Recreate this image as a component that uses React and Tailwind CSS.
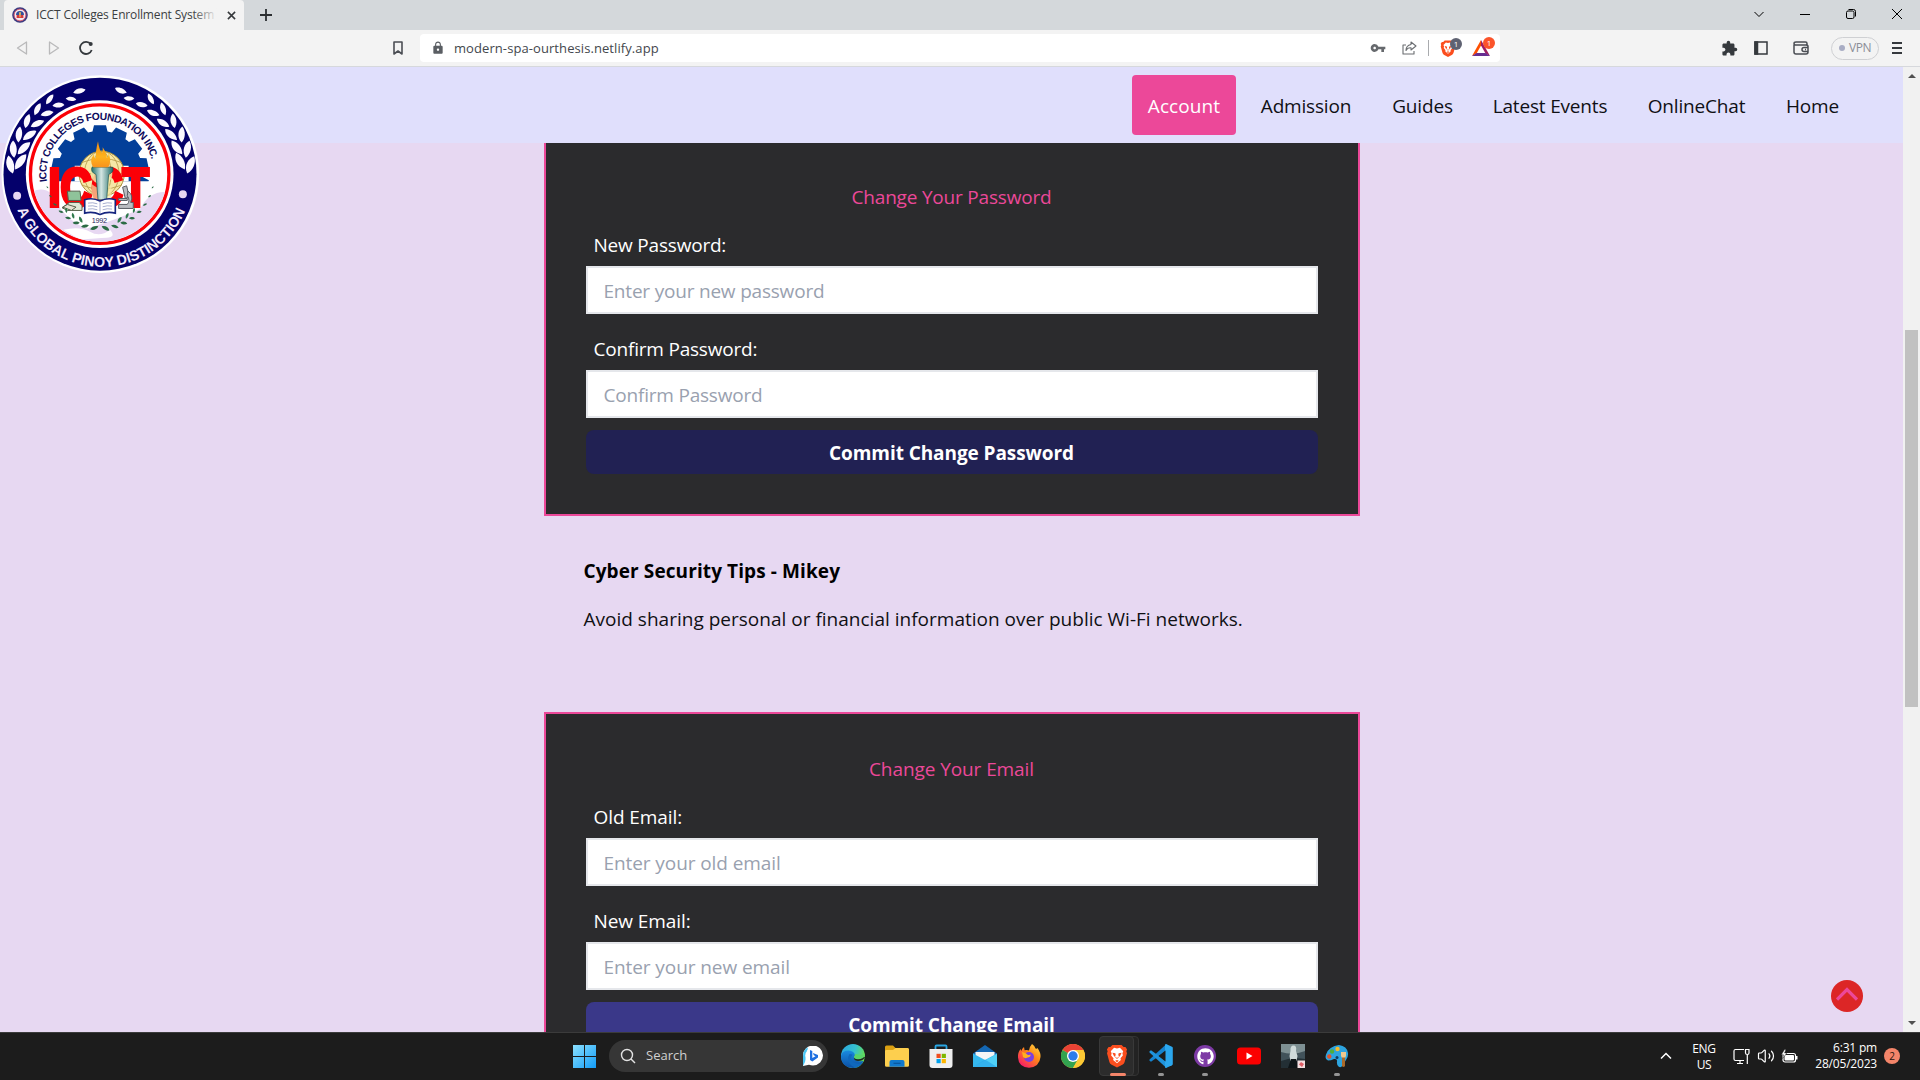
import React from "react";
import { MdVpnKey, MdExtension, MdLock } from "react-icons/md";
import { FaGithub } from "react-icons/fa";
import { Volume2 } from "lucide-react";

const polar = (r, deg) => {
  const a = (deg * Math.PI) / 180;
  return [300 + r * Math.sin(a), 325 - r * Math.cos(a)];
};

const LAUREL = [20, 30, 40, 50, 60, 70, 80];

const gearPath = (() => {
  const pts = [];
  for (let i = -5; i <= 5; i++) {
    const c = i * 26;
    [[130, -13], [130, -10], [148, -7], [148, 7], [130, 10], [130, 13]].forEach(([r, d]) => pts.push(polar(r, c + d).map((n) => n.toFixed(1)).join(" ")));
  }
  return "M" + pts.join("L") + "Z";
})();

function Leaf({ x, y, rot, len, fill }) {
  return (
    <path
      d={`M0 ${len} C${-len * 0.62} ${len * 0.3} ${-len * 0.4} ${-len * 0.6} ${len * 0.15} ${-len} C${len * 0.6} ${-len * 0.4} ${len * 0.5} ${len * 0.5} 0 ${len}Z`}
      transform={`translate(${x} ${y}) rotate(${rot})`}
      fill={fill}
    />
  );
}

function CollegeSeal({ className }) {
  return (
    <svg viewBox="0 24 600 604" className={className}>
      <defs>
        <path id="sealTop" d="M141 349 A161 161 0 1 1 448 386" />
        <path id="sealBottom" d="M50 428 A272 272 0 0 0 572 380" />
        <clipPath id="sealInner"><circle cx="299" cy="325" r="203" /></clipPath>
        <clipPath id="gearClip"><rect x="120" y="160" width="360" height="186" /></clipPath>
        <linearGradient id="torch" x1="0" x2="1"><stop offset="0" stopColor="#1f6f6b" /><stop offset=".45" stopColor="#d5e6e3" /><stop offset="1" stopColor="#1b6965" /></linearGradient>
        <linearGradient id="flame" x1="0" x2="0" y1="0" y2="1"><stop offset="0" stopColor="#f08a12" /><stop offset=".6" stopColor="#ffb31c" /><stop offset="1" stopColor="#f7921e" /></linearGradient>
      </defs>
      <circle cx="301" cy="325" r="297" fill="#fff" />
      <circle cx="300" cy="325" r="290" fill="#04006b" />
      {LAUREL.map((a, i) => {
        const s = 16 + i * 2;
        return [1, -1].map((k) => {
          const [ox, oy] = polar(272, k * (a + 4));
          const [ix, iy] = polar(243, k * (a + 1));
          return (
            <g key={`${a}${k}`}>
              {i > 0 && <Leaf x={ox} y={oy} rot={k * (a - 62)} len={s} fill="#fbf8ff" />}
              <Leaf x={ix} y={iy} rot={k * (a - 112)} len={s} fill="#fbf8ff" />
            </g>
          );
        });
      })}
      {[1, -1].map((k) => {
        const [x, y] = polar(258, k * 14);
        return <Leaf key={k} x={x} y={y} rot={k * -72} len={19} fill="#fbf8ff" />;
      })}
      <circle cx="51" cy="390" r="12" fill="#e7d7f2" />
      <circle cx="549" cy="385" r="12" fill="#e7d7f2" />
      <circle cx="299" cy="325" r="222" fill="#fff" />
      <circle cx="299" cy="325" r="208" fill="#fff" stroke="#fb0007" strokeWidth="10" />
      <g clipPath="url(#sealInner)">
        <path d="M90 380Q150 350 175 420Q210 470 260 488Q330 470 420 430Q450 370 510 380V540H90Z" fill="#e7d8f2" />
        <path d="M190 492q50-12 80 6t60-6q20 22 -10 24t-80 6z" fill="#fff" />
      </g>
      <g clipPath="url(#gearClip)"><path d={gearPath} fill="#033f99" /></g>
      <path d="M224 300V346H386V300Z" fill="#fff" />
      <circle cx="305" cy="324" r="68" fill="#f6e8a6" stroke="#a98d37" strokeWidth="3" />
      <g fill="none" stroke="#b49a48" strokeWidth="2.5">
        <ellipse cx="305" cy="324" rx="28" ry="68" />
        <ellipse cx="305" cy="324" rx="52" ry="68" />
        <path d="M238 324h134M245 290q60-24 120 0M245 358q60 24 120 0M305 256v136" />
      </g>
      <text x="145" y="420" textLength="302" lengthAdjust="spacingAndGlyphs" className="fill-[#fb0007] stroke-[#fb0007] [stroke-width:12px] text-[162px] font-bold [font-family:'Liberation_Sans']">ICCT</text>
      <circle cx="305" cy="324" r="32" fill="#f6e8a6" opacity=".85" />
      <path d="M276 355q28 24 58 0v45h-58z" fill="#f6e8a6" opacity=".7" />
      <path d="M276 304h62q6 14-12 22l-6 76h-26l-6-76q-18-8-12-22z" fill="url(#torch)" stroke="#15524e" strokeWidth="2" />
      <path d="M280 304Q266 284 282 266Q282 278 288 278Q286 256 294 226Q298 254 306 262Q310 254 308 244Q324 268 320 276Q326 274 326 262Q336 290 324 304Z" fill="url(#flame)" />
      <g fill="#dfe9d5" stroke="#55604b" strokeWidth="3">
        <path d="M202 376h38l3 28h-38z" fill="#8fc39a" />
        <path d="M208 410h30l8 10v14h-44l-16-8z" />
        <path d="M188 424l14-8 26 8-14 10z" fill="#e8e2d2" />
      </g>
      <g fill="#b9bcc0" stroke="#585c62" strokeWidth="3">
        <path d="M368 364l12-4 8 34-12 4z" />
        <path d="M384 376q18 12 8 34h8v18h-44v-12h26q10-12 0-26z" />
        <path d="M356 398h26v6h-26z" />
      </g>
      <path d="M254 402q24-8 46 4q22-12 46-4v40q-24-6-46 4q-22-10-46-4z" fill="#fff" stroke="#16257f" strokeWidth="5" />
      <path d="M300 406v38M264 412q14-3 28 2M264 421q14-3 28 2M264 430q14-3 28 2M308 414q14-5 28-2M308 423q14-5 28-2M308 432q14-5 28-2" stroke="#7a86b8" strokeWidth="2" fill="none" />
      {[104, 114, 124, 134, 144, 154, 164, 174].map((a, i) =>
        [1, -1].map((k) => {
          const [x, y] = polar(163, k * a);
          const [x2, y2] = polar(149, k * (a + 3));
          const s = 4 + i * 1.3;
          return (
            <g key={`${a}${k}`}>
              <Leaf x={x} y={y} rot={k * (a - 60)} len={s} fill="#2b6b45" />
              {i > 2 && i < 6 && <Leaf x={x2} y={y2} rot={k * (a - 125)} len={s} fill="#2f7a4d" />}
            </g>
          );
        })
      )}
      <text x="275" y="471" textLength="46" className="fill-[#1c1c5c] text-[22px] [font-family:'Liberation_Sans']">1992</text>
      <text className="fill-[#0d0a5c] text-[31px] font-bold tracking-[-1.700px] [font-family:'Liberation_Sans']">
        <textPath href="#sealTop" startOffset="2">ICCT COLLEGES FOUNDATION INC.</textPath>
      </text>
      <text className="fill-[#f3eafa] text-[43px] font-bold [font-family:'Liberation_Sans']">
        <textPath href="#sealBottom" startOffset="4" textLength="646" lengthAdjust="spacingAndGlyphs">A GLOBAL PINOY DISTINCTION</textPath>
      </text>
    </svg>
  );
}

function FavIcon() {
  return (
    <svg viewBox="0 0 16 16" className="size-4">
      <circle cx="8" cy="8" r="7.8" fill="#3a3a80" />
      <circle cx="8" cy="8" r="5.9" fill="#f3e8f2" stroke="#d4566a" strokeWidth=".9" />
      <path d="M4 8a4 4 0 0 1 8 0z" fill="#33509c" />
      <path d="M4.6 8h6.8v3H4.6z" fill="#d53a3c" />
      <path d="M7 5.2h2l-.4 5H7.4z" fill="#e9b25c" />
    </svg>
  );
}

function BraveLogo({ className }) {
  return (
    <svg viewBox="0 0 24 26" className={className}>
      <path d="M7 1h10l2.2 2.3 2-.2 1.8 2.7-.8 2.1.7 2.2-2.6 9.4q-.5 1.7-2 2.7L12 25.6l-6.3-3.4q-1.5-1-2-2.7L1.100 10.100l.7-2.200L1 5.800l1.800-2.700 2 .2z" fill="#fb4e1e" />
      <path d="M12 4.800l3.200-.7 3.600 3.700-.9 2.300.5 2.300-2.600 3.100.4 1.800-1.600 1.400-2.600 2.200-2.600-2.200-1.600-1.400.4-1.800-2.600-3.100.5-2.300-.9-2.300 3.600-3.700z" fill="#fff" />
      <path d="M7 9.400l3.200.6.4 2-.8 1.600 2.200 1.600 2.200-1.600-.8-1.600.4-2 3.200-.6-1.500 3.200-1.300 1.600-2.200 2-2.200-2-1.300-1.600zM10 18.200l2-.9 2 .9-2 1.500z" fill="#fb4e1e" />
    </svg>
  );
}

function TabStrip() {
  return (
    <div className="flex h-[30px] items-center bg-[#d4d8db] pl-1">
      <div className="flex h-full w-60 items-center rounded-t bg-[#f3f3f3] pl-2">
        <FavIcon />
        <div className="relative ml-2 w-[181px] overflow-hidden whitespace-nowrap text-[12px] tracking-[-0.16px] text-[#3b3e42]">
          ICCT Colleges Enrollment System
          <div className="absolute inset-y-0 right-0 w-6 bg-linear-to-r from-transparent to-[#f3f3f3]" />
        </div>
        <svg viewBox="0 0 10 10" className="ml-[10px] size-[9px]" fill="none" stroke="#35383b" strokeWidth="1.700"><path d="M1 1l8 8M9 1l-8 8" /></svg>
      </div>
      <svg viewBox="0 0 12 12" className="ml-4 size-3" fill="none" stroke="#2b2e31" strokeWidth="1.800"><path d="M6 0v12M0 6h12" /></svg>
      <div className="ml-auto flex pb-0.5 text-black">
        {["M.5 3l4.500 4.500L9.500 3", "M0 5.500h10", "", "M0 0l10 10M10 0L0 10"].map((d, i) => (
          <div key={i} className="flex w-[46px] items-center justify-center">
            <svg viewBox="0 0 10 10" className="size-[10px] overflow-visible" fill="none" stroke="currentColor" strokeWidth="1">
              {d ? <path d={d} /> : <><rect x=".5" y="2" width="7.500" height="7.500" rx="1.500" /><path d="M2.500 .5h5q2 0 2 2v5" /></>}
            </svg>
          </div>
        ))}
      </div>
    </div>
  );
}

function Toolbar() {
  return (
    <div className="flex h-[37px] items-center border-b border-[#d6d8dc] bg-[#f3f3f3] text-[#35393d]">
      <svg viewBox="0 0 12 14" className="ml-4 h-[14px] w-3" fill="none" stroke="#b9b9ba" strokeWidth="1.300" strokeLinejoin="round"><path d="M10.500 1v12L1.500 7z" /></svg>
      <svg viewBox="0 0 12 14" className="ml-5 h-[14px] w-3" fill="none" stroke="#b9b9ba" strokeWidth="1.300" strokeLinejoin="round"><path d="M1.500 1v12l9-6z" /></svg>
      <svg viewBox="0 0 14 14" className="ml-[19px] size-[14px]" fill="none" stroke="currentColor" strokeWidth="1.800"><path d="M11.800 3.300A6 6 0 1 0 12.700 9" /><circle cx="11.700" cy="3" r="2" fill="currentColor" stroke="none" /></svg>
      <svg viewBox="0 0 10 14" className="ml-[300px] h-[14px] w-[10px]" fill="none" stroke="#4b4e54" strokeWidth="1.600" strokeLinejoin="round"><path d="M1 1h8v12L5 10 1 13z" /></svg>
      <div className="ml-[17px] flex h-7 w-[1080px] items-center rounded bg-white pl-[11px]">
        <MdLock className="size-[14px] text-[#5a5e63]" />
        <span className="ml-[9px] pt-px text-[13px] tracking-[0.08px] text-[#43474d]">modern-spa-ourthesis.netlify.app</span>
        <MdVpnKey className="ml-auto size-[16px] text-[#66696d]" />
        <svg viewBox="0 0 15 14" className="ml-[16px] h-[14px] w-[15px]" fill="none" stroke="#6a6d71" strokeWidth="1.100" strokeLinejoin="round"><path d="M4 4H1v9h11v-3M9 1l5 4-5 4V6.800Q5.500 6.500 4 9.500 4 4.500 9 3.500z" /></svg>
        <span className="ml-[11px] h-4 w-px bg-[#a9abae]" />
        <span className="relative ml-[11px]">
          <BraveLogo className="h-[19px] w-[16px]" />
          <span className="absolute -right-[6px] -top-px flex size-[12px] items-center justify-center rounded-full bg-[#5f6272] text-[8px] leading-none text-white">1</span>
        </span>
        <span className="relative ml-[16px] mr-[10px]">
          <svg viewBox="0 0 18 16" className="h-[16px] w-[18px]">
            <path d="M9 0L0 16l4.500-2.500L9 5.500z" fill="#ff5000" />
            <path d="M9 0l9 16-4.500-2.500L9 5.500z" fill="#9e1f63" />
            <path d="M0 16h18l-4.500-3h-9z" fill="#662d91" />
          </svg>
          <span className="absolute -right-[5px] -top-[3px] flex size-[12px] items-center justify-center rounded-full bg-[#fb542b] text-[8px] leading-none text-white">1</span>
        </span>
      </div>
      <MdExtension className="ml-[221px] size-[17px]" />
      <svg viewBox="0 0 14 14" className="ml-[16px] size-[14px]" fill="none" stroke="currentColor" strokeWidth="1.500"><path d="M1 1h12v12H1z" /><path d="M1 1h2.500v12H1z" fill="currentColor" /></svg>
      <svg viewBox="0 0 16 14" className="ml-[25px] h-[14px] w-4" fill="none" stroke="#4b4e54" strokeWidth="1.500" strokeLinejoin="round"><path d="M1 3.500V11q0 2 2 2h10q2 0 2-2V5.500q0-1.500-2-1.500H2.500Q1 4 1 2.500 1 1 3 1h9.500q1.500 0 1.500 1.500V4M15 6.500h-4q-2 0-2 2t2 2h4M12 8.500h1" /></svg>
      <div className="ml-[22px] flex h-[23px] w-12 items-center justify-center gap-1 rounded-full border border-[#cfd0d3] text-[12px] tracking-[-0.4px] text-[#8b8d97]">
        <span className="size-1.5 rounded-full bg-[#a9adc4]" />VPN
      </div>
      <div className="ml-[13px] flex w-[10px] flex-col gap-[3.500px]">
        <span className="h-[1.500px] bg-[#35393d]" /><span className="h-[1.500px] bg-[#35393d]" /><span className="h-[1.500px] bg-[#35393d]" />
      </div>
    </div>
  );
}

function SiteHeader() {
  const link = "flex h-[60px] items-center justify-center whitespace-nowrap pt-0.5 tracking-[-0.18px] text-[#101014]";
  return (
    <header className="relative z-10 flex h-[76px] shrink-0 items-center justify-end gap-2 bg-[#e0dffc] pr-12 text-[19px]">
      <a className="flex h-[60px] w-[104px] items-center justify-center rounded bg-[#ec4899] pt-0.5 tracking-[0.1px] text-white">Account</a>
      <a className={`${link} w-[124px]`}>Admission</a>
      <a className={`${link} w-[93px]`}>Guides</a>
      <a className={`${link} w-[146px]`}>Latest Events</a>
      <a className={`${link} w-[131px]`}>OnlineChat</a>
      <a className={`${link} w-[85px]`}>Home</a>
      <CollegeSeal className="absolute left-0 top-[7px] h-[201px] w-[200px]" />
    </header>
  );
}

function FormCard({ title, fields, action, tone, tracking }) {
  return (
    <section className={`h-[376px] shrink-0 border-2 border-[#ec4899] bg-[#2b2b2d] p-10 text-[19px] ${tracking}`}>
      <h2 className="h-7 pt-px text-center leading-7 text-[#ec4899]">{title}</h2>
      {fields.map(([label, hint]) => (
        <label key={label} className="mt-5 block">
          <span className="mb-2 block h-7 pl-2 pt-px leading-7 text-white">{label}</span>
          <input placeholder={hint} className="block h-12 w-full border-2 border-gray-200 bg-white pl-4 pt-0.5 outline-none placeholder:text-gray-400" />
        </label>
      ))}
      <button className={`mt-3 block h-11 w-full rounded-lg pt-0.5 font-bold tracking-[-0.08px] text-white ${tone}`}>{action}</button>
    </section>
  );
}

function Page() {
  return (
    <div className="flex h-[965px] shrink-0 overflow-hidden">
      <div className="relative flex w-[1903px] flex-col overflow-hidden bg-[#e7d8f2]">
        <SiteHeader />
        <main className="mx-auto -mt-[3px] flex w-[816px] flex-col">
          <FormCard title="Change Your Password" fields={[["New Password:", "Enter your new password"], ["Confirm Password:", "Confirm Password"]]} action="Commit Change Password" tone="bg-[#212153]" tracking="tracking-[-0.2px]" />
          <section className="h-[196px] shrink-0 px-10 pt-[41px] text-[19px] leading-7 text-black">
            <h3 className="font-bold tracking-[0.1px]">Cyber Security Tips - Mikey</h3>
            <p className="mt-5 whitespace-nowrap tracking-[0.01px] text-[#101014]">Avoid sharing personal or financial information over public Wi-Fi networks.</p>
          </section>
          <FormCard title="Change Your Email" fields={[["Old Email:", "Enter your old email"], ["New Email:", "Enter your new email"]]} action="Commit Change Email" tone="bg-[#3a3889]" tracking="tracking-[-0.08px]" />
        </main>
        <button className="absolute bottom-[20px] right-10 flex size-8 items-center justify-center rounded-full bg-[#dc2626]">
          <svg viewBox="0 0 22 14" className="-mt-1 h-[14px] w-[22px]" fill="none" stroke="#ec4899" strokeWidth="3.200"><path d="M1 12.500L11 2.500l10 10" /></svg>
        </button>
      </div>
      <div className="flex w-[17px] flex-col items-center bg-[#f1f1f1]">
        <svg viewBox="0 0 8 4" className="mt-[7px] h-1 w-2"><path d="M0 4l4-4 4 4z" fill="#505050" /></svg>
        <div className="mt-[252px] h-[377px] w-[13px] bg-[#c1c1c1]" />
        <svg viewBox="0 0 8 4" className="mb-[7px] mt-auto h-1 w-2"><path d="M0 0l4 4 4-4z" fill="#505050" /></svg>
      </div>
    </div>
  );
}

const apps = [
  {
    name: "edge",
    art: (
      <>
        <defs>
          <linearGradient id="e1" x1="0" x2="1" y1="0" y2=".3"><stop offset="0" stopColor="#2aa5e0" /><stop offset=".6" stopColor="#35c1d0" /><stop offset="1" stopColor="#63dc5a" /></linearGradient>
          <linearGradient id="e2" x1="0" x2="0" y1="0" y2="1"><stop offset="0" stopColor="#1a8be0" /><stop offset="1" stopColor="#0b4fa5" /></linearGradient>
        </defs>
        <circle cx="12" cy="12" r="12" fill="url(#e1)" />
        <path d="M0 12Q1 6.500 7.500 6.500q6 .5 6.500 5-1.500 1-1 3 1.500 3.500 9 2.500l.3.600Q18.500 24 12 24 0 23 0 12z" fill="url(#e2)" />
        <path d="M8.500 10Q5.500 15 9 20q2 2.800 5 3.600 5-.6 8.300-5.600-5 3-9.300.5-5-3-1.500-8z" fill="#0f68bd" />
        <path d="M13.800 11.500q.6 2-.9 3 .6 2.300 4.100 2.500 5 0 6.700-3.500Q24 18 20 21l3.500 1 .8-6-.5-3z" fill="#1c1c1c" opacity=".95" />
        <path d="M14 10q0 1.500-1 2.500-.4 2.500 4 2.800 5.500 0 6.700-3.800z" fill="#58d568" />
      </>
    ),
  },
  {
    name: "files",
    art: (
      <>
        <path d="M0 3q0-1.500 1.500-1.500h6.500l2.500 2.500H22q2 0 2 2v4H0z" fill="#dba012" />
        <path d="M0 7q0-1 1.500-1H8l2.500-2H22.500Q24 4 24 5.500v16q0 1.200-1.500 1.200h-21Q0 22.700 0 21.500z" fill="#fdcf4e" />
        <path d="M4.500 22.700V18q0-2 2-2h11q2 0 2 2v4.700z" fill="#1079cd" />
        <path d="M8.500 19.300h7" stroke="#0a559b" strokeWidth="1.200" />
      </>
    ),
  },
  {
    name: "store",
    art: (
      <>
        <path d="M6.500 6V2.500q0-1 1-1h9q1 0 1 1V6" fill="none" stroke="#29a6e2" strokeWidth="1.800" />
        <path d="M.5 5h23v16q0 3-3 3h-17q-3 0-3-3z" fill="#efefef" />
        <path d="M7.500 9.800h4.200V14H7.500z" fill="#f04e1f" /><path d="M12.700 9.800h4.200V14h-4.200z" fill="#7db700" />
        <path d="M7.500 15h4.200v4.200H7.500z" fill="#00a1ec" /><path d="M12.700 15h4.200v4.200h-4.200z" fill="#fdb500" />
      </>
    ),
  },
  {
    name: "mail",
    art: (
      <>
        <path d="M0 9.500L12 1l12 8.500v2H0z" fill="#1467b4" />
        <path d="M2.500 8h19v6l-9.500 6-9.500-6z" fill="#f3f4f6" />
        <path d="M0 9.500l12 6.500 12-6.500V23H0z" fill="#35b8ef" />
        <path d="M0 23L24 10v13z" fill="#4fd0f7" /><path d="M0 23h24L12 15.500z" fill="#28a5e8" opacity=".7" />
      </>
    ),
  },
  {
    name: "firefox",
    art: (
      <>
        <defs><linearGradient id="f1" x1="1" x2=".2" y1="0" y2="1"><stop offset="0" stopColor="#ffe14a" /><stop offset=".45" stopColor="#ff8a16" /><stop offset="1" stopColor="#f5156c" /></linearGradient></defs>
        <path d="M15 0q3 2 3.500 4.500 1.500.5 2-.5Q24 9 23.500 13 22.500 23 12 23.800 1.500 23 1 13.500.500 9 3.500 5l.8 2Q5 4.500 7 3l.6 3.200q3-.6 4.400.4Q12.500 2.500 15 0z" fill="url(#f1)" />
        <circle cx="12" cy="13" r="5" fill="#7a3fe0" />
        <path d="M5 8q4 .5 5.500 2.800 2 .5 3-.3.500 2.500-3 3-2.500 1.500-4.500-.5z" fill="#ffb01f" />
      </>
    ),
  },
  {
    name: "chrome",
    art: (
      <>
        <circle cx="12" cy="12" r="12" fill="#fcc934" />
        <path d="M12 12L1.600 6A12 12 0 0 1 22.400 6z" fill="#e94235" />
        <path d="M12 12L1.600 6A12 12 0 0 0 12 24l5-9z" fill="#32a350" />
        <path d="M12 6h10.400A12 12 0 0 1 12 24l5.500-9z" fill="#fcc934" />
        <circle cx="12" cy="12" r="6" fill="#fff" /><circle cx="12" cy="12" r="4.700" fill="#2b7de9" />
      </>
    ),
  },
  { name: "brave", active: true },
  {
    name: "code",
    open: true,
    art: (
      <>
        <path d="M17.500 6.500L2 17.700.5 16.800v-1.300L17.500 0z" fill="#1583cf" />
        <path d="M17.500 17.500L2 6.300.5 7.200v1.300L17.500 24z" fill="#1f93dc" />
        <path d="M17 0l6 2.800q.8.400.8 1.200v16q0 .8-.8 1.200L17 24q-.8 0-1-.8V.8q.2-.8 1-.8z" fill="#2ba7ee" />
        <path d="M16.500 6.500v11L9.500 12z" fill="#1c1c1c" />
      </>
    ),
  },
  { name: "github", open: true },
  { name: "youtube", art: <><rect y="3.500" width="24" height="17" rx="3.500" fill="#fb0000" /><path d="M9.500 8.500v7l6-3.500z" fill="#fff" /></> },
  {
    name: "photo",
    art: (
      <>
        <path d="M0 0h24v24H0z" fill="#41525a" /><path d="M0 0h24v7Q12 12 0 8z" fill="#7e9093" />
        <path d="M0 17q10-4 24-2v9H0z" fill="#232f35" />
        <path d="M9.500 7Q9 1.500 12.500 1.500T15 7l1.500 5-1 5-3 1.500-3-1.500-1-5z" fill="#cfdada" /><path d="M10 15h5l3 9H7z" fill="#0e1518" />
        <path d="M16.500 16.500H24V24h-7.500z" fill="#f2dfe0" /><path d="M18 20.500l2-2.500 3 2-2 3z" fill="#df5d66" />
      </>
    ),
  },
  {
    name: "paint",
    open: true,
    art: (
      <>
        <path d="M14 1q8 1 9 8 .5 4-2 7-2 3-3.500 6-2 2-4 .5-2-2-1.500-5 .5-3-3-2.500-3 1.500-6 1.500Q-.5 16 1 10.500 4 2 14 1z" fill="#2da4df" />
        <circle cx="12.500" cy="5" r="2.200" fill="#f8bb2a" /><circle cx="7" cy="7.500" r="2.200" fill="#4fae3a" /><circle cx="4.300" cy="12.500" r="2.200" fill="#e2542c" /><circle cx="12" cy="13.500" r="1.500" fill="#123a5c" />
        <path d="M16 8h5v4l-1 2h-3l-1-2z" fill="#edc88f" /><path d="M17 13.500h3V22q-1.500 2-3 0z" fill="#a9692a" />
      </>
    ),
  },
];

function AppIcon({ app }) {
  if (app.name === "brave") return <BraveLogo className="h-6 w-[22px]" />;
  if (app.name === "github") return <span className="flex size-[22px] items-center justify-center rounded-full bg-[#7d3aa5]"><FaGithub className="size-[17px] text-white" /></span>;
  return <svg viewBox="0 0 24 24" className="size-6">{app.art}</svg>;
}

function Taskbar() {
  return (
    <footer className="flex h-12 shrink-0 items-center border-t border-[#3b3b3b] bg-[#1c1c1c] pb-px text-white">
      <svg viewBox="0 0 23 23" className="ml-[573px] size-[23px]">
        <defs><linearGradient id="win" x1="0" y1="0" x2="1" y2="1"><stop offset="0" stopColor="#8be0fd" /><stop offset="1" stopColor="#129cf8" /></linearGradient></defs>
        <path d="M0 0h11v11H0zM12 0h11v11H12zM0 12h11v11H0zM12 12h11v11H12z" fill="url(#win)" />
      </svg>
      <div className="ml-[13px] flex h-8 w-[219px] items-center rounded-full bg-[#363636] pl-[11px] pr-[5px]">
        <svg viewBox="0 0 16 16" className="size-4" fill="none" stroke="#e3e3e3" strokeWidth="1.400"><circle cx="7" cy="7" r="5.500" /><path d="M11 11l4 4" /></svg>
        <span className="ml-[10px] text-[13px] text-[#d0d0d0]">Search</span>
        <svg viewBox="0 0 20 20" className="ml-auto size-5"><path d="M0 20V10a10 10 0 1 1 10 9.500q-2 0-4-.7z" fill="#fff" /><path d="M0 20V10a10 10 0 0 1 5-8.700L2 16z" fill="#49c6f5" /><circle cx="10.200" cy="9.800" r="8" fill="#fff" /><path d="M7 4l2.300.9v7l3.200-1.700-1.700-.9-.9-2.200 5.100 1.800v2.700L9.300 15.400 7 14z" fill="#1d6fe0" /></svg>
      </div>
      <div className="ml-[3px] flex">
        {apps.map((app) => (
          <div key={app.name} className="relative flex h-[46px] w-11 items-center justify-center">
            {app.active && <><span className="absolute left-[9px] top-[3px] h-10 w-[35px] rounded border border-[#333] bg-[#232323]" /><span className="absolute left-1 top-[3px] h-10 w-[35px] rounded border border-[#393939] bg-[#2c2c2c]" /></>}
            <span className="relative"><AppIcon app={app} /></span>
            {app.active && <span className="absolute bottom-[3px] left-[15px] h-[3px] w-4 rounded-full bg-[#f4856a]" />}
            {app.open && <span className="absolute bottom-[3px] left-[19px] h-[3px] w-1.5 rounded-full bg-[#949494]" />}
          </div>
        ))}
      </div>
      <svg viewBox="0 0 12 8" className="ml-auto h-2 w-3" fill="none" stroke="currentColor" strokeWidth="1.500"><path d="M1 6.500l5-5 5 5" /></svg>
      <div className="ml-[20px] w-6 pt-px text-center text-[12px] leading-4 tracking-[-0.3px]">ENG<br />US</div>
      <svg viewBox="0 0 17 17" className="ml-[17px] size-[17px]" fill="none" stroke="currentColor" strokeWidth="1.200"><path d="M11 1.500H2.500Q1 1.500 1 3v8q0 1.500 1.500 1.500H11M4 15.500h6M7 12.500v3M12.500 1.500h3.500V5q0 1.500-1.700 1.500T12.500 5zM14.300 6.500V16" /></svg>
      <Volume2 className="ml-[7px] size-[18px]" strokeWidth={1.600} />
      <svg viewBox="0 0 17 13" className="ml-[6px] h-[13px] w-[17px] overflow-visible"><rect x="2" y="3.500" width="12.500" height="8.500" rx="2" fill="none" stroke="#fff" strokeWidth="1.200" /><rect x="3.500" y="5" width="9.500" height="5.500" rx="1" fill="#fff" /><path d="M15 6h1.500v3.500H15z" fill="#fff" /><path d="M3.500-.5L.3 4.800h2.200L1.500 8.500 6 3H3.600L5-.5z" fill="#fff" stroke="#1c1c1c" strokeWidth=".5" /></svg>
      <div className="ml-[15px] w-[64px] whitespace-nowrap text-right text-[12px] leading-4 tracking-[-0.2px]">6:31 pm<br />28/05/2023</div>
      <span className="ml-[7px] mr-5 flex size-4 items-center justify-center rounded-full bg-[#f4856a] text-[10px] leading-none text-[#2a1510]">2</span>
    </footer>
  );
}

export default function App() {
  return (
    <div className="flex h-[1080px] w-[1920px] flex-col overflow-hidden [font-family:'Open_Sans','Noto_Sans',sans-serif]">
      <TabStrip />
      <Toolbar />
      <Page />
      <Taskbar />
    </div>
  );
}
